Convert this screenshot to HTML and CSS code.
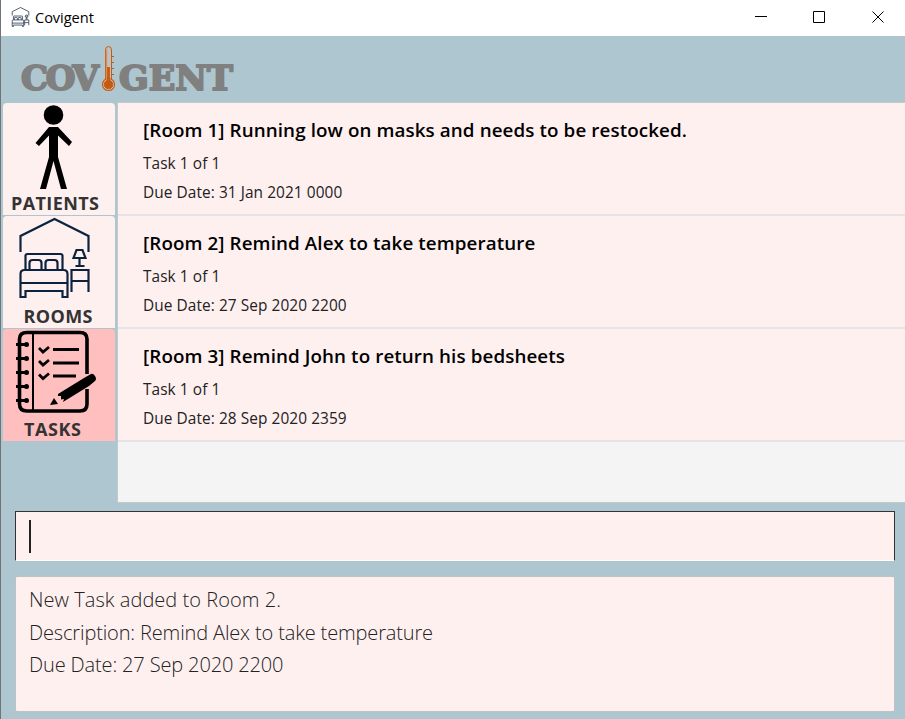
FILE: index.html
```html
<!DOCTYPE html>
<html lang="en">
<head>
<meta charset="utf-8">
<title>Covigent</title>
<link rel="stylesheet" href="styles.css">
</head>
<body>
<svg class="defs" aria-hidden="true">
  <symbol id="room" viewBox="0 0 72 82">
    <g fill="none" stroke="currentColor">
      <path d="M2 35V19L36 2L70 19V35"/>
      <path d="M7 53V39Q7 37 9 37H42Q44 37 44 39V53M11 53V46Q11 43 14 43H20Q23 43 23 46V53M27 53V46Q27 43 30 43H36Q39 43 39 46V53"/>
      <path d="M2 80V57Q2 53 6 53H45Q49 53 49 57V80H44V74H7V80ZM2 66H49M53 75V53H70V75M53 64H70M61 41V49M57 49H66M58 33H64L67 41H55Z"/>
    </g>
  </symbol>
</svg>
<div class="window">
  <header class="titlebar">
    <svg class="app-icon"><use href="#room"/></svg>
    <span class="app-name">Covigent</span>
    <svg class="controls" viewBox="0 0 130 14" fill="none" stroke="#000">
      <path d="M0 6.5H12M58.5 1.5H69.500V12.500H58.500Z"/>
      <path d="M117.500 1.500L128.500 12.500M128.500 1.500L117.500 12.500"/>
    </svg>
  </header>
  <div class="brand">
    <svg viewBox="0 0 235 66" width="235" height="66" role="img" aria-label="Covigent">
      <g class="wordmark">
        <text x="21" y="53.500" textLength="78" lengthAdjust="spacing">COV</text>
        <text x="119" y="53.500" textLength="114" lengthAdjust="spacingAndGlyphs">GENT</text>
      </g>
      <g fill="none" stroke="#c55a11">
        <path d="M105.500 43V14Q105.500 10.500 108.500 10.500T111.500 14V43" fill="#b9c3c6"/>
        <path d="M106.500 14V42" stroke="#e08c58" stroke-width="1.500"/>
        <path d="M112 20.500H114M112 26.500H114M112 32.500H114M112 38.500H114" stroke-width="1"/>
        <circle cx="108.500" cy="48.500" r="6" fill="#d9cfc9" stroke-width="1.200"/>
        <circle cx="108.500" cy="48.500" r="4.300" fill="#c55a11"/>
        <path d="M108.500 31V48" stroke-width="2.800"/>
      </g>
    </svg>
  </div>
  <main class="main">
    <nav class="tabs">
      <div class="tab patients">
        <svg viewBox="0 0 112 88">
          <circle cx="50.500" cy="12" r="9.800"/>
          <path d="M46 24H55L69 39L66 43L55 32.500V54L64 86H58L50.500 58L43 86H37L46 54V32.500L36 43L32.500 40Z"/>
        </svg>
        <span>PATIENTS</span>
      </div>
      <div class="tab rooms">
        <svg viewBox="0 0 112 88"><use href="#room" x="15.500" y="1" width="72" height="82"/></svg>
        <span>ROOMS</span>
      </div>
      <div class="tab tasks active">
        <svg viewBox="0 0 112 88" fill="none" stroke="#000" stroke-width="3.600">
          <path d="M84 45V10Q84 3.500 77 3.500H24Q16.500 3.500 16.500 10V75Q16.500 82 24 82H77Q84 82 84 75V60"/>
          <path d="M30 4V82" stroke-width="2"/>
          <path d="M13 15.500H23M13 29.500H23M13 43.500H23M13 57.500H23M13 71.500H23" stroke-width="3"/>
          <path d="M50 20.500H76M50 34H76M50 47H73" stroke-width="3"/>
          <path d="M36 19L40 23L46 18M36 32L40 36L46 31M36 45.500L40 49.500L46 44.500" stroke-width="2.800"/>
          <g fill="#000" stroke="none">
            <circle cx="23.500" cy="15.500" r="2.500"/><circle cx="23.500" cy="29.500" r="2.500"/><circle cx="23.500" cy="43.500" r="2.500"/><circle cx="23.500" cy="57.500" r="2.500"/><circle cx="23.500" cy="71.500" r="2.500"/>
            <path d="M55 65L81 49L88 45Q90 44 92 47Q94 50 92 52L86 57L60 73L61 70L58 70.500L58 67L55 67Z"/>
            <path d="M47 76L51 69L55 75Z"/>
          </g>
        </svg>
        <span>TASKS</span>
      </div>
    </nav>
    <section class="list">
      <article class="card">
        <h2>[Room 1] Running low on masks and needs to be restocked.</h2>
        <p class="count">Task 1 of 1</p>
        <p>Due Date: 31 Jan 2021 0000</p>
      </article>
      <article class="card">
        <h2>[Room 2] Remind Alex to take temperature</h2>
        <p class="count">Task 1 of 1</p>
        <p>Due Date: 27 Sep 2020 2200</p>
      </article>
      <article class="card">
        <h2>[Room 3] Remind John to return his bedsheets</h2>
        <p class="count">Task 1 of 1</p>
        <p>Due Date: 28 Sep 2020 2359</p>
      </article>
    </section>
  </main>
  <div class="command"><i class="caret"></i></div>
  <div class="result">
    <p class="status">New Task added to Room 2.</p>
    <p>Description: Remind Alex to take temperature</p>
    <p>Due Date: 27 Sep 2020 2200</p>
  </div>
</div>
</body>
</html>
```
FILE: styles.css
```css
* { box-sizing: border-box; }
body { margin: 0; font-family: "Open Sans", "Noto Sans", sans-serif; }
h2, p { margin: 0; white-space: nowrap; }
.defs { display: none; }
.window {
  width: 905px;
  height: 719px;
  overflow: hidden;
  display: flex;
  flex-direction: column;
  background: #aec6cf;
  border-left: 1px solid #707476;
}
.titlebar {
  height: 36px;
  flex: none;
  display: flex;
  align-items: center;
  background: #fff;
  padding: 0 20px 2px 10px;
}
.app-icon { width: 19px; height: 20px; color: #34435a; stroke-width: 3.4px; }
.app-name { margin-left: 5px; font-size: 14.6px; letter-spacing: -0.05px; color: #000; }
.controls { width: 130px; height: 14px; margin-left: auto; }
.brand { height: 66px; flex: none; margin-left: -1px; }
.brand svg { display: block; }
.wordmark {
  font-family: "DejaVu Serif", serif;
  font-weight: bold;
  font-size: 34px;
  fill: #808080;
  stroke: #808080;
  stroke-width: 2px;
  stroke-linejoin: round;
}
.main { display: flex; height: 401px; flex: none; }
.tabs { width: 112px; margin: 1px 3px 0 2px; display: flex; flex-direction: column; gap: 1px; }
.tab {
  height: 112px;
  background: #fff0f0;
  border-radius: 4px 4px 0 0;
  display: flex;
  flex-direction: column;
}
.tab.active { background: #ffbfbf; }
.tab svg { width: 112px; height: 88px; flex: none; }
.tab span {
  font-weight: 700;
  font-size: 18px;
  line-height: 24px;
  letter-spacing: 0.4px;
  color: #333;
}
.patients span { margin-left: 8px; }
.rooms svg { color: #0c2340; stroke-width: 2.2px; }
.rooms span { margin-left: 20.5px; }
.tasks span { margin-left: 21px; letter-spacing: 0.6px; }
.list { flex: 1; background: #f4f4f4; border: solid #c4c8c9; border-width: 1px 0 1px 1px; margin-left: -1px; }
.card {
  height: 113px;
  background: #fff0f0;
  border-bottom: 2px solid #e4e3e5;
  padding: 13px 0 0 25px;
}
.card h2 { font-size: 18.8px; font-weight: 600; line-height: 28px; letter-spacing: 0.1px; color: #000; }
.card p { font-size: 15.4px; line-height: 29px; letter-spacing: 0.08px; color: #222; }
.card .count { margin-top: 5px; }
.command {
  width: 880px;
  height: 50px;
  flex: none;
  margin: 8px 0 0 14px;
  background: #fff0f0;
  border: 1px solid #333;
  border-bottom-color: #fff;
  padding: 8px 13px;
}
.caret { display: block; width: 2px; height: 33px; background: #222; }
.result {
  width: 880px;
  height: 136px;
  flex: none;
  margin: 15px 0 0 14px;
  background: #fff0f0;
  border: 1px solid #bfc1c3;
  border-radius: 2px;
  padding: 7px 13px;
  font-weight: 300;
  font-size: 20px;
  line-height: 32.5px;
  letter-spacing: -0.14px;
  color: #222;
}
.result .status { letter-spacing: 0.05px; }
```
